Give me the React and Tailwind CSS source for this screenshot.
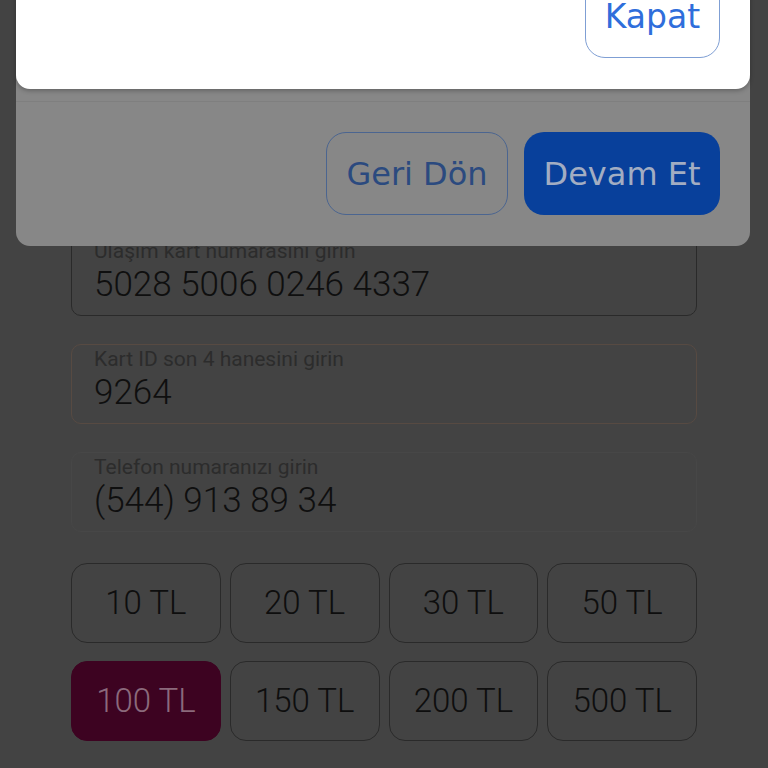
import React from "react";

const amounts = ["10 TL", "20 TL", "30 TL", "50 TL", "100 TL", "150 TL", "200 TL", "500 TL"];

function Field({ label, value, border }) {
  return (
    <div className={`h-[80px] rounded-[10px] border ${border} pl-[22px] pt-[1px] flex flex-col`}>
      <div className="text-[21px] leading-[27px] text-[#2c2c2c]">{label}</div>
      <div className="text-[35px] leading-[40px] font-light text-[#0f0f0f]">{value}</div>
    </div>
  );
}

export default function App() {
  return (
    <div
      className="relative h-[768px] w-[768px] overflow-hidden bg-[#434343]"
      style={{ fontFamily: "Roboto, 'Liberation Sans', sans-serif" }}
    >
      {/* underlying form */}
      <div className="flex flex-col px-[71px] pt-[236px]">
        <div className="flex flex-col gap-[28px]">
          <Field label="Ulaşım kart numarasını girin" value="5028 5006 0246 4337" border="border-[#2a2a2a]" />
          <Field label="Kart ID son 4 hanesini girin" value="9264" border="border-[#574a42]" />
          <Field label="Telefon numaranızı girin" value="(544) 913 89 34" border="border-[#474747]" />
        </div>
        <div className="mt-[31px] grid grid-cols-4 gap-x-[9px] gap-y-[18px]">
          {amounts.map((a, i) => (
            <div
              key={a}
              className={`flex h-[80px] items-center justify-center rounded-[16px] border text-[33px] font-light ${
                i === 4
                  ? "border-[#3d0321] bg-[#3d0321] text-[#8b6a7c]"
                  : "border-[#2a2a2a] text-[#0e0e0e]"
              }`}
            >
              {a}
            </div>
          ))}
        </div>
      </div>

      {/* first dialog (dimmed) */}
      <div className="absolute left-[16px] top-0 w-[734px] h-[246px] rounded-b-[14px] bg-[#878787] flex flex-col">
        <div className="h-[102px] border-b border-[#7f7f7f]" />
        <div
          className="flex justify-end gap-[16px] pr-[30px] pt-[30px]"
          style={{ fontFamily: "'DejaVu Sans', sans-serif" }}
        >
          <div className="flex h-[83px] w-[182px] items-center justify-center rounded-[20px] border border-[#4b6590] text-[32px] text-[#2b4a7f]">
            Geri Dön
          </div>
          <div className="flex h-[83px] w-[196px] items-center justify-center rounded-[20px] bg-[#08409b] text-[32px] text-[#a2adc2]">
            Devam Et
          </div>
        </div>
      </div>

      {/* top dialog */}
      <div className="absolute left-[16px] top-[-40px] w-[734px] h-[129px] rounded-b-[14px] bg-white shadow-[0_2px_4px_rgba(0,0,0,0.25)] flex justify-end items-end pr-[30px] pb-[31px]">
        <div
          className="flex h-[83px] w-[135px] items-center justify-center rounded-[20px] border border-[#7f9fd4] text-[33px] text-[#2f6edb]"
          style={{ fontFamily: "'DejaVu Sans', sans-serif" }}
        >
          Kapat
        </div>
      </div>
    </div>
  );
}
